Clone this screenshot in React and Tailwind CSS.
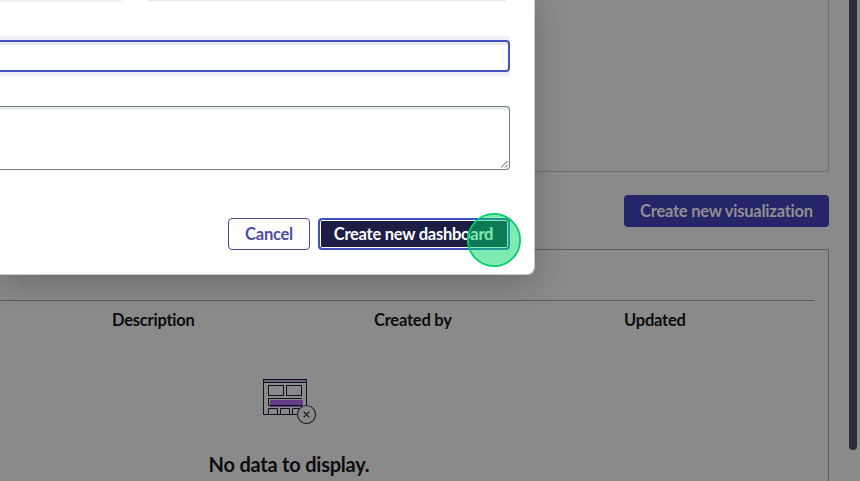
function EmptyDashboardIcon() {
  return (
    <svg width="54" height="46" viewBox="0 0 54 46" fill="none" className="block">
      <rect x="1.5" y="1.5" width="43" height="35" stroke="#10101f" />
      <rect x="2" y="2" width="42" height="2" fill="#6f637c" />
      <path d="M1 4.5h44" stroke="#10101f" />
      <rect x="6.5" y="7.5" width="15" height="10" stroke="#10101f" />
      <rect x="24.5" y="7.5" width="15" height="10" stroke="#10101f" />
      <rect x="8" y="22" width="33" height="7" fill="#643b86" />
      <path d="M40 20.500H6.500V27.500H40" stroke="#10101f" />
      <path d="M6.500 36V30.500H15.500V36M18.500 36V30.500H27.500V36M30.500 36V30.500H39" stroke="#10101f" />
      <circle cx="44.500" cy="36.500" r="9" fill="#8a8a8a" stroke="#24242d" strokeWidth="1.2" />
      <path d="M41.700 33.700l5.600 5.600m0-5.600l-5.600 5.600" stroke="#17171f" strokeWidth="1.2" />
    </svg>
  );
}

function DashboardPage() {
  return (
    <main className="flex h-full bg-[#8a8a8a] pr-[3px]">
      <div className="flex w-[829px] flex-col">
        <section className="h-[172px] shrink-0 rounded-br border-r border-b border-[#6c6d6f]" />
        <button className="mt-[23px] flex h-8 w-[205px] shrink-0 items-center justify-center self-end rounded-[4px] bg-[#25256a] pb-px text-[16.5px] leading-6 font-bold tracking-[-0.23px] whitespace-nowrap text-[#909090]">
          <span>Create new visualization</span>
        </button>
        <section className="mt-[22px] h-[232px] shrink-0 border-t border-r border-[#5d5e60] pt-[50px] pr-[14px]">
          <div className="flex h-10 border-t border-[#5a5b5d] text-[16.5px] leading-[38px] font-bold tracking-[-0.23px] text-[#0c0c0e]">
            <span className="w-[262px] pl-[112px]">Description</span>
            <span className="w-[362px] pl-[112px]">Created by</span>
            <span>Updated</span>
          </div>
          <div className="flex w-[578px] flex-col items-center pt-[38px]">
            <EmptyDashboardIcon />
            <p className="mt-[26px] text-[20px] leading-7 font-bold tracking-[-0.22px] whitespace-nowrap text-[#0c0c0e]">No data to display.</p>
          </div>
        </section>
      </div>
      <div className="ml-auto h-[450px] w-2 rounded-b-full bg-[#2f2c3a]" />
    </main>
  );
}

function CreateDashboardDialog() {
  return (
    <div role="dialog" className="absolute top-0 left-0 flex h-[275px] w-[535px] flex-col rounded-br-[8px] border-r border-b border-[#c9caca] bg-white pr-[24px] shadow-[0_8px_32px_rgba(0,0,0,0.22)]">
      <div className="flex h-10 shrink-0 pr-[4px]">
        <div className="h-px w-[122px] bg-[#eeeeee] shadow-[0_1px_2px_rgba(0,0,0,0.06)]" />
        <div className="ml-[26px] h-px flex-1 bg-[#e9e9e9] shadow-[0_1px_2px_rgba(0,0,0,0.06)]" />
      </div>
      <div className="h-8 shrink-0 rounded-r-[4px] border-y-2 border-r-2 border-[#4052c2] shadow-[0_-4px_0_#eef0fb,0_4px_0_#eef0fb,inset_0_3px_0_#ebebed]" />
      <div className="mt-[34px] flex h-16 shrink-0 items-end justify-end rounded-r-[4px] border-y border-r border-[#73777c] shadow-[inset_0_3px_0_#e7eaeb]">
        <svg width="9" height="9" viewBox="0 0 9 9" className="block">
          <path d="M1 7.500L7.500 1M5 7.500L7.500 5" stroke="#4b4b4b" />
        </svg>
      </div>
      <div className="mt-12 flex h-8 shrink-0 justify-end gap-2 text-[16.5px] leading-6 font-bold tracking-[-0.25px] whitespace-nowrap">
        <button className="flex w-[82px] items-center justify-center rounded-[4px] border border-[#4c4792] pb-px text-[#4d4ba5]">Cancel</button>
        <button className="flex w-[192px] items-center justify-center rounded-[4px] border-2 border-[#4052c2] bg-[#1d1d45] pr-px pb-px text-white shadow-[inset_0_0_0_1px_white]">Create new dashboard</button>
      </div>
    </div>
  );
}

export default function App() {
  return (
    <div className="relative h-[481px] w-[860px] overflow-hidden font-['Lato',sans-serif] [font-variant-ligatures:none]">
      <DashboardPage />
      <CreateDashboardDialog />
      <div className="absolute top-[212.5px] left-[466.5px] size-[54px] rounded-full border-2 border-[#02d166] bg-[#00d967]/50 bg-clip-padding" />
    </div>
  );
}
